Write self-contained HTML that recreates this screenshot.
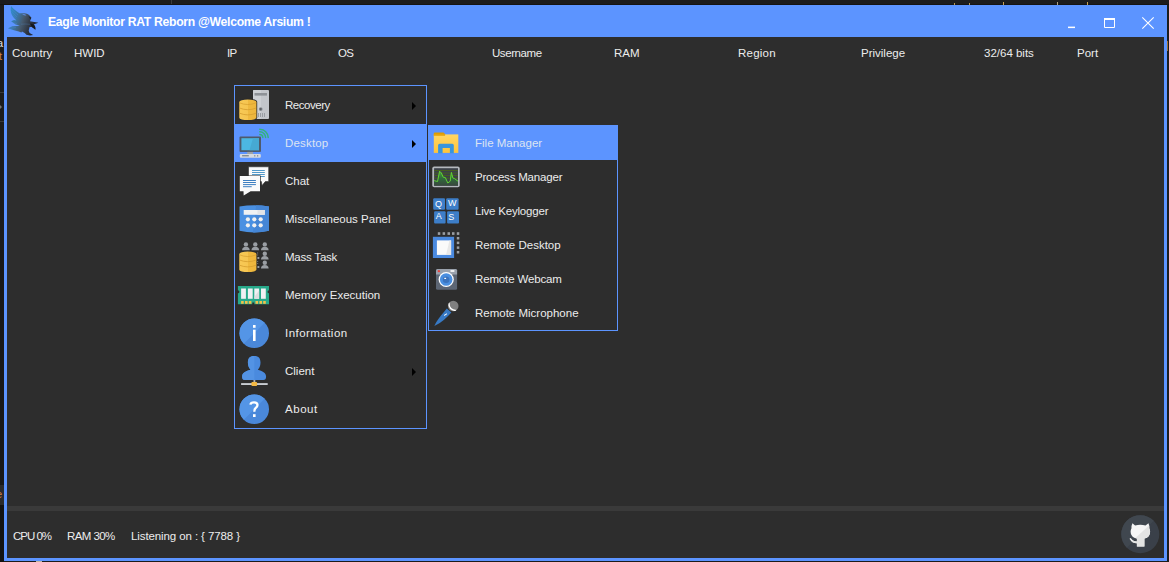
<!DOCTYPE html>
<html><head><meta charset="utf-8">
<style>
*{margin:0;padding:0;box-sizing:border-box}
html,body{width:1169px;height:562px;overflow:hidden;background:#1c1c1c;font-family:"Liberation Sans",sans-serif}
.abs{position:absolute}
#win{position:absolute;left:4px;top:5px;width:1163px;height:556px;background:#5c94ff}
#content{position:absolute;left:7px;top:37px;width:1157px;height:521px;background:#2d2d2d}
.title{position:absolute;left:48px;top:15px;font-size:12.2px;font-weight:bold;color:#fff;white-space:nowrap;line-height:14px;letter-spacing:-0.3px}
.hdr{position:absolute;top:46px;font-size:11.5px;color:#ececec;white-space:nowrap;line-height:14px}
.status{position:absolute;top:529px;font-size:11.5px;color:#ececec;white-space:nowrap;line-height:14px}
#sep{position:absolute;left:7px;top:506px;width:1157px;height:5px;background:#3a3a3a}
.menu{position:absolute;background:#2d2d2d;border:1px solid #5c94ff}
.item{position:absolute;left:0;width:100%;}
.item.hl{background:#5c94ff}
.lbl{position:absolute;font-size:11.5px;color:#ececec;white-space:nowrap;line-height:14px}
.hl .lbl{color:#dde4f2}
.arr{position:absolute;width:0;height:0;border-top:4px solid transparent;border-bottom:4px solid transparent;border-left:4px solid #000}
.ico{position:absolute}
</style></head><body>

<div class="abs" style="left:171px;top:0;width:1px;height:5px;background:#3a3a3a"></div>
<div class="abs" style="left:0;top:4px;width:1169px;height:1px;background:#151412"></div>
<div class="abs" style="left:0;top:92px;width:4px;height:1px;background:#3a3a3a"></div>
<div class="abs" style="left:0;top:121px;width:4px;height:1px;background:#3a3a3a"></div>
<div class="abs" style="left:0;top:105px;width:0;height:0;border-top:2.5px solid transparent;border-bottom:2.5px solid transparent;border-left:2.5px solid #777"></div>
<div class="abs" style="left:0;top:250px;width:4px;height:235px;background:#181818"></div>
<div class="abs" style="left:0;top:485px;width:4px;height:20px;background:#2a2a2a"></div>
<div class="abs" style="left:0;top:505px;width:4px;height:57px;background:#121212"></div>
<div class="abs" style="left:-3px;top:36px;font-size:11px;line-height:14px;color:#e0e0e0;overflow:hidden;width:7px">a</div>
<div class="abs" style="left:-1px;top:49px;font-size:11px;line-height:14px;color:#d08040;overflow:hidden;width:5px">t</div>
<div class="abs" style="left:-4px;top:487px;font-size:11px;line-height:14px;color:#d08040;width:10px;overflow:hidden">e</div>
<div class="abs" style="left:1167px;top:41px;width:1px;height:10px;background:#a07030"></div>
<div class="abs" style="left:36px;top:561px;width:6px;height:1px;background:#bdb5a5"></div>
<div class="abs" style="left:954px;top:3px;width:1px;height:2px;background:#b89a50"></div>
<div class="abs" style="left:969px;top:3px;width:1px;height:2px;background:#b89a50"></div>
<div class="abs" style="left:1003px;top:2px;width:1px;height:3px;background:#c8a050"></div>
<div class="abs" style="left:1057px;top:2px;width:1px;height:3px;background:#b0a080"></div>
<div class="abs" style="left:1087px;top:2px;width:1px;height:3px;background:#c8a050"></div>
<div id="win"></div>
<div id="content"></div>
<div class="title">Eagle Monitor RAT Reborn @Welcome Arsium !</div>

<div class="hdr" style="left:12px">Country</div>
<div class="hdr" style="left:74px">HWID</div>
<div class="hdr" style="left:227px;letter-spacing:-0.6px">IP</div>
<div class="hdr" style="left:338px;letter-spacing:-0.8px">OS</div>
<div class="hdr" style="left:492px;letter-spacing:-0.43px">Username</div>
<div class="hdr" style="left:614px">RAM</div>
<div class="hdr" style="left:738px;letter-spacing:0.24px">Region</div>
<div class="hdr" style="left:861px">Privilege</div>
<div class="hdr" style="left:984px">32/64 bits</div>
<div class="hdr" style="left:1077px">Port</div>

<div id="sep"></div>
<div class="status" style="left:13px;letter-spacing:-1.0px">CPU 0%</div>
<div class="status" style="left:67px;letter-spacing:-0.58px">RAM 30%</div>
<div class="status" style="left:131px;letter-spacing:-0.1px">Listening on : { 7788 }</div>

<!-- main menu -->
<div class="menu" style="left:234px;top:85px;width:193px;height:344px">
 <div class="item" style="top:0;height:38px"><div class="lbl" style="left:50px;top:12px;letter-spacing:-0.46px">Recovery</div><div class="arr" style="left:177px;top:15.5px"></div></div>
 <div class="item hl" style="top:38px;height:38px"><div class="lbl" style="left:50px;top:12px;letter-spacing:0.18px">Desktop</div><div class="arr" style="left:177px;top:15.5px"></div></div>
 <div class="item" style="top:76px;height:38px"><div class="lbl" style="left:50px;top:12px">Chat</div></div>
 <div class="item" style="top:114px;height:38px"><div class="lbl" style="left:50px;top:12px">Miscellaneous Panel</div></div>
 <div class="item" style="top:152px;height:38px"><div class="lbl" style="left:50px;top:12px;letter-spacing:-0.22px">Mass Task</div></div>
 <div class="item" style="top:190px;height:38px"><div class="lbl" style="left:50px;top:12px">Memory Execution</div></div>
 <div class="item" style="top:228px;height:38px"><div class="lbl" style="left:50px;top:12px;letter-spacing:0.46px">Information</div></div>
 <div class="item" style="top:266px;height:38px"><div class="lbl" style="left:50px;top:12px">Client</div><div class="arr" style="left:177px;top:15.5px"></div></div>
 <div class="item" style="top:304px;height:38px"><div class="lbl" style="left:50px;top:12px;letter-spacing:0.55px">About</div></div>
</div>

<!-- sub menu -->
<div class="menu" style="left:428px;top:125px;width:190px;height:206px">
 <div class="item hl" style="top:0;height:34px"><div class="lbl" style="left:46px;top:10px">File Manager</div></div>
 <div class="item" style="top:34px;height:34px"><div class="lbl" style="left:46px;top:10px;letter-spacing:-0.19px">Process Manager</div></div>
 <div class="item" style="top:68px;height:34px"><div class="lbl" style="left:46px;top:10px;letter-spacing:-0.2px">Live Keylogger</div></div>
 <div class="item" style="top:102px;height:34px"><div class="lbl" style="left:46px;top:10px">Remote Desktop</div></div>
 <div class="item" style="top:136px;height:34px"><div class="lbl" style="left:46px;top:10px;letter-spacing:-0.14px">Remote Webcam</div></div>
 <div class="item" style="top:170px;height:34px"><div class="lbl" style="left:46px;top:10px">Remote Microphone</div></div>
</div>


<svg class="abs" style="left:0;top:0" width="1169" height="562" viewBox="0 0 1169 562">
<defs>
 <linearGradient id="gold" x1="0" x2="1" y1="0" y2="0"><stop offset="0" stop-color="#f8c955"/><stop offset="0.5" stop-color="#f6c550"/><stop offset="0.5" stop-color="#efb93f"/><stop offset="1" stop-color="#eeb63c"/></linearGradient>
 <linearGradient id="fold" x1="0" x2="0" y1="0" y2="1"><stop offset="0" stop-color="#ffd665"/><stop offset="1" stop-color="#ffc43a"/></linearGradient>
 <g id="db">
  <path d="M238.5,101.8 A9.35,3.1 0 0 1 257.2,101.8 L257.2,117.8 A9.35,3.1 0 0 1 238.5,117.8 Z" fill="#2d2d2d"/>
  <path d="M239.3,101.9 A8.55,2.3 0 0 1 256.4,101.9 L256.4,117.8 A8.55,2.3 0 0 1 239.3,117.8 Z" fill="url(#gold)"/>
  <path d="M239.5,102.8 Q247.8,106.3 256.2,102.8" fill="none" stroke="#d9a232" stroke-width="0.8"/>
  <path d="M239.5,108 Q247.8,111.4 256.2,108" fill="none" stroke="#d9a232" stroke-width="0.9"/>
  <path d="M239.5,113.2 Q247.8,116.6 256.2,113.2" fill="none" stroke="#d9a232" stroke-width="0.9"/>
 </g>
</defs>

<!-- Recovery: server + db -->
<rect x="253" y="90" width="16" height="29" rx="1" fill="#c3c6cb"/>
<rect x="253" y="90" width="8" height="29" rx="1" fill="#cdd0d4"/>
<rect x="254.5" y="93" width="12.5" height="2.6" fill="#8e9297"/>
<circle cx="260.7" cy="109.1" r="1.9" fill="#8a8e94"/><circle cx="260.7" cy="109.1" r="1.1" fill="#5f6368"/>
<g fill="#9a9ea4"><rect x="258" y="113" width="1" height="4"/><rect x="260" y="113" width="1" height="4"/><rect x="262" y="113" width="1" height="4"/><rect x="264" y="113" width="1" height="4"/></g>
<use href="#db"/>

<!-- Desktop -->
<rect x="239.5" y="136.5" width="21.5" height="15.5" rx="1" fill="#4e5a6c"/>
<rect x="241.4" y="138.2" width="17.6" height="12" fill="#4cb7e2"/>
<path d="M253,138.2 L259,138.2 L259,150.2 L249.5,150.2 Z" fill="#46a9d3"/>
<rect x="247.2" y="151.9" width="5.8" height="2.3" fill="#9aa2aa"/>
<rect x="239.8" y="154.1" width="21" height="3.6" rx="1" fill="#d6dae0"/>
<rect x="242.1" y="155.1" width="6.7" height="1.3" fill="#7a8490"/>
<rect x="254.3" y="155" width="1" height="1.6" fill="#7a8490"/><rect x="257.2" y="155" width="1" height="1.6" fill="#7a8490"/>
<g fill="none" stroke="#33b37c" stroke-width="1.5" stroke-linecap="round">
 <path d="M259.8,134.6 A3,3 0 0 1 262.8,137.6"/>
 <path d="M259.8,131.8 A5.8,5.8 0 0 1 265.6,137.6"/>
 <path d="M259.8,129.2 A8.4,8.4 0 0 1 268.2,137.6"/>
</g>

<!-- Chat -->
<path d="M248.5,166.8 H268.7 V181.6 H265.3 L262,185.6 L261.4,181.6 H248.5 Z" fill="#fafafa" stroke="#2d2d2d" stroke-width="0.6"/>
<g fill="#3f8fc4"><rect x="252" y="170" width="12.8" height="0.9"/><rect x="252" y="172" width="12.8" height="0.9"/><rect x="252" y="174" width="12.8" height="0.9"/><rect x="252" y="176" width="12.8" height="0.9"/></g>
<path d="M239.8,176.1 H260 V191.2 H250.6 L243.7,195.6 L243.5,191.2 H239.8 Z" fill="#fafafa" stroke="#2d2d2d" stroke-width="1.4" paint-order="stroke"/>
<g fill="#3d7fc1"><rect x="243" y="180" width="12.9" height="1"/><rect x="243" y="182" width="12.9" height="1"/><rect x="243" y="184.1" width="12.9" height="1"/><rect x="243" y="186.2" width="8.7" height="1"/></g>

<!-- Misc panel -->
<clipPath id="mpc"><path d="M239.5,206.4 Q254.2,204 269,206.4 L269,230.8 Q254.2,234 239.5,230.8 Z"/></clipPath>
<path d="M239.5,206.4 Q254.2,204 269,206.4 L269,230.8 Q254.2,234 239.5,230.8 Z" fill="#4a90e2"/>
<path d="M256.8,200 L275,200 L275,240 L252,240 Z" fill="#4586d6" clip-path="url(#mpc)"/>
<rect x="243.7" y="210" width="21.1" height="4.8" fill="#eff1f3"/>
<rect x="257.5" y="210" width="7.3" height="4.8" fill="#e2e4e7"/>
<g fill="#f0f0f0"><circle cx="247.9" cy="219.3" r="2.1"/><circle cx="254.3" cy="219.3" r="2.1"/><circle cx="260.7" cy="219.3" r="2.1"/><circle cx="247.9" cy="225.3" r="2.1"/><circle cx="254.3" cy="225.3" r="2.1"/><circle cx="260.7" cy="225.3" r="2.1"/></g>

<!-- Mass task -->
<g fill="#9a9ea3">
 <circle cx="245.9" cy="244.4" r="2.2"/><path d="M242.1,250.3 Q242.1,246.8 245.9,246.8 Q249.7,246.8 249.7,250.3 Z"/>
 <circle cx="255.3" cy="244.4" r="2.2"/><path d="M251.5,250.3 Q251.5,246.8 255.3,246.8 Q259.1,246.8 259.1,250.3 Z"/>
 <circle cx="264.8" cy="244.4" r="2.2"/><path d="M261,250.3 Q261,246.8 264.8,246.8 Q268.6,246.8 268.6,250.3 Z"/>
 <circle cx="264.8" cy="253.8" r="2.2"/><path d="M261,259.6 Q261,256.1 264.8,256.1 Q268.6,256.1 268.6,259.6 Z"/>
 <circle cx="264.8" cy="262.8" r="2.2"/><path d="M261,268.6 Q261,265.1 264.8,265.1 Q268.6,265.1 268.6,268.6 Z"/>
 <rect x="257.3" y="252.5" width="0.8" height="1"/><rect x="257.3" y="254.5" width="0.8" height="1"/>
 <rect x="257.3" y="257" width="2" height="2"/><rect x="257.3" y="261" width="0.8" height="1"/><rect x="257.3" y="263" width="0.8" height="1"/><rect x="257.3" y="266" width="2" height="2"/>
</g>
<use href="#db" transform="translate(0,152)"/>

<!-- Memory -->
<path d="M237.9,286 H269 V290.2 A1.5,1.5 0 0 0 269,293.2 V304.2 H254.3 V302.6 H252.3 V304.2 H237.9 V293.2 A1.5,1.5 0 0 0 237.9,290.2 Z" fill="#27a98a"/>
<g fill="#f1f0f3"><rect x="241.1" y="288.5" width="4.8" height="10.3"/><rect x="247.9" y="288.5" width="4.8" height="10.3"/><rect x="254.3" y="288.5" width="4.8" height="10.3"/><rect x="261" y="288.5" width="4.8" height="10.3"/></g>
<path d="M259.1,290.5 V298.8 H254.3 V297 Z" fill="#dedde0"/>
<g fill="#f3c04a"><rect x="241.1" y="301" width="2.6" height="2.8"/><rect x="245" y="301" width="2.6" height="2.8"/><rect x="248.8" y="301" width="2.6" height="2.8"/><rect x="255.5" y="301" width="2.6" height="2.8"/><rect x="259.4" y="301" width="2.6" height="2.8"/><rect x="263.2" y="301" width="2.6" height="2.8"/></g>

<!-- Info -->
<circle cx="254.25" cy="333.25" r="14.75" fill="#4a88da"/>
<path d="M243.82,343.68 A14.75,14.75 0 1 1 264.68,322.82 Z" fill="#5495e6"/>
<rect x="253" y="325" width="2.6" height="2.8" fill="#fff"/>
<rect x="253" y="329.7" width="2.6" height="11.3" fill="#fff"/>

<!-- Client -->
<path d="M254.3,355.9 C249.5,355.9 247.9,358.5 247.9,362.8 C247.9,366 249.3,368.5 250.6,369.7 C246,371 242.1,372.5 242.1,376.5 C242.1,379 243,379.9 245,379.9 L263.3,379.9 C265.3,379.9 266.1,379 266.1,376.5 C266.1,372.5 262.3,371 257.8,369.7 C259.1,368.5 260.5,366 260.5,362.8 C260.5,358.5 259,355.9 254.3,355.9 Z" fill="#4a8ade"/>
<path d="M254.3,355.9 C249.5,355.9 247.9,358.5 247.9,362.8 C247.9,366 249.3,368.5 250.6,369.7 C246,371 242.1,372.5 242.1,376.5 C242.1,379 243,379.9 245,379.9 L254.3,379.9 Z" fill="#5393e4"/>
<rect x="253.5" y="380" width="1.8" height="2.5" fill="#b0b4ba"/>
<rect x="241.1" y="383.1" width="26.6" height="1.9" fill="#c8ccd2"/>
<rect x="251.4" y="382.1" width="5.7" height="3.9" rx="1" fill="#f2b843"/>

<!-- About -->
<circle cx="254.25" cy="409.25" r="14.75" fill="#4a88da"/>
<path d="M243.82,419.68 A14.75,14.75 0 1 1 264.68,398.82 Z" fill="#5495e6"/>
<path d="M250.4,404.6 Q250.8,402.3 254,402.3 Q257.5,402.3 257.5,405 Q257.5,406.8 255.7,408 Q254.3,409 254.3,411.8" fill="none" stroke="#fff" stroke-width="2.3"/>
<rect x="253" y="414.2" width="2.6" height="2.8" fill="#fff"/>

<!-- File manager -->
<path d="M433.8,133.5 Q433.8,132.4 435,132.4 H443.5 L445.3,134.2 V136 H433.8 Z" fill="#e09c00"/>
<rect x="433.8" y="134.4" width="24.5" height="18.5" fill="url(#fold)"/>
<rect x="433.8" y="134.2" width="11.3" height="1.5" fill="#e09c00"/>
<path d="M438.1,153.2 V145.3 Q438.1,143.8 439.6,143.8 H452.3 Q453.8,143.8 453.8,145.3 V153.2 H449.9 V148.1 H442.6 V153.2 Z" fill="#3a95dc"/>

<!-- Process manager -->
<defs><linearGradient id="pmg" gradientUnits="userSpaceOnUse" x1="0" y1="171" x2="0" y2="186"><stop offset="0" stop-color="#45a23a"/><stop offset="0.5" stop-color="#2f6a3a"/><stop offset="1" stop-color="#3a453f"/></linearGradient></defs>
<rect x="432.3" y="166.6" width="27.4" height="20.7" rx="1.8" fill="#b4b8be"/>
<rect x="434.1" y="168.2" width="23.9" height="17.5" fill="#3b4048"/>
<g fill="#4b6a12"><rect x="434.1" y="170" width="23.9" height="0.7"/><rect x="434.1" y="172.7" width="23.9" height="0.7"/><rect x="434.1" y="175.1" width="23.9" height="0.7"/><rect x="434.1" y="177.8" width="23.9" height="0.7"/></g>
<path d="M434.1,180.6 L437.5,181.5 L439.6,171.2 L441.4,173 L443.2,177.2 L445.3,177.5 L447.8,183 L450.2,181.2 L451.4,172.4 L452.9,178.1 L454.4,178.5 L458,181.2 V185.7 H434.1 Z" fill="url(#pmg)"/>
<path d="M434.1,180.6 L437.5,181.5 L439.6,171.2 L441.4,173 L443.2,177.2 L445.3,177.5 L447.8,183 L450.2,181.2 L451.4,172.4 L452.9,178.1 L454.4,178.5 L458,181.2" fill="none" stroke="#5fd433" stroke-width="1"/>

<!-- Keylogger -->
<g fill="#3d7ec8">
 <rect x="433.2" y="198.2" width="11.8" height="11.5" rx="1"/>
 <rect x="446.2" y="198.2" width="12.4" height="11.5" rx="1"/>
 <rect x="434.1" y="211.2" width="11.5" height="12.4" rx="1"/>
 <rect x="447.1" y="211.2" width="11.9" height="12.4" rx="1"/>
</g>
<g fill="#fff" font-family="Liberation Sans" font-size="9" text-anchor="middle">
 <text x="438.5" y="207">Q</text><text x="452.2" y="206">W</text><text x="438.8" y="219.3">A</text><text x="451.3" y="219.5">S</text>
</g>

<!-- Remote desktop -->
<g fill="#9a9ea3">
 <rect x="437.8" y="232.2" width="2.5" height="2.7"/><rect x="442.6" y="232.2" width="2.5" height="2.7"/><rect x="447.5" y="232.2" width="2.5" height="2.7"/><rect x="452" y="232.2" width="2.5" height="2.7"/><rect x="456.8" y="232.2" width="2.5" height="2.7"/>
 <rect x="456.8" y="237" width="2.5" height="2.5"/><rect x="456.8" y="241.6" width="2.5" height="2.5"/><rect x="456.8" y="246.4" width="2.5" height="2.5"/><rect x="456.8" y="251" width="2.5" height="2.5"/>
</g>
<rect x="432.9" y="236.8" width="21.2" height="21.2" fill="#4a8ae0"/>
<rect x="436.9" y="240.4" width="14.2" height="14.5" fill="#fafafa"/>
<path d="M449.5,240.4 H451.1 V254.9 H446 Z" fill="#e8e8e8"/>

<!-- Webcam -->
<rect x="436" y="269" width="21.1" height="20.8" rx="1.5" fill="#5d6674"/>
<path d="M436,274.4 V270.5 Q436,269 437.5,269 H455.6 Q457.1,269 457.1,270.5 V274.4 Z" fill="#9aa2ad"/>
<rect x="437.8" y="270.2" width="2.1" height="1.9" fill="#e8413c"/>
<rect x="450.5" y="270.2" width="3.9" height="1.6" fill="#fff"/>
<circle cx="446.2" cy="279.5" r="7.6" fill="#fff"/>
<circle cx="446.2" cy="279.5" r="6.3" fill="#4a8fe0"/>
<circle cx="446.1" cy="279.7" r="3.3" fill="#3b73bd"/>
<rect x="444.3" y="277.8" width="1.8" height="1.2" fill="#fff"/>


<!-- title bar buttons -->
<rect x="1068" y="26.6" width="7" height="1.5" fill="#fff"/>
<path d="M1104.5,18.5 H1114.5 V27.5 H1104.5 Z" fill="none" stroke="#fff" stroke-width="1"/>
<rect x="1104" y="18" width="11" height="2" fill="#fff"/>
<path d="M1142.3,17.3 L1153.7,28.7 M1142.3,28.7 L1153.7,17.3" stroke="#fff" stroke-width="1.1"/>

<!-- eagle -->
<defs>
 <linearGradient id="eg" gradientUnits="userSpaceOnUse" x1="8" y1="14" x2="36" y2="24"><stop offset="0" stop-color="#1a8ab5" stop-opacity="0.7"/><stop offset="0.3" stop-color="#34729a" stop-opacity="0.85"/><stop offset="0.55" stop-color="#46596c"/><stop offset="0.8" stop-color="#2f3642"/><stop offset="1" stop-color="#1e232c"/></linearGradient>
</defs>
<path d="M11.1,6.1 C13,8.5 16,11.5 19.4,13.2 L22.9,13.3 C25.5,13 28.5,13.5 30.4,16.4 L31.3,17.8 L30,21.3 L38.4,22.7 L34,24.2 L35.3,27.1 L35.3,29.8 L34,28.4 L31.8,27.1 L29.6,27.1 L28.7,30.7 L29.6,32.9 L33.1,35.1 L30,35.6 L26.4,34.7 L24.7,32.9 L22,31.6 L21.4,32.4 L18.8,31.5 L14,30.2 L7.9,28.3 L12.4,26.3 L17.2,26 L19.8,25.4 L15.6,24.4 L11.1,21.2 L14,19.9 L16.5,20.4 C14,18.5 12,16 11,12.5 C10.5,10 10.6,8 11.1,6.1 Z" fill="url(#eg)"/>
<g stroke="#5b8ff0" stroke-width="0.5" stroke-opacity="0.5" fill="none"><path d="M11.3,9 L18,15"/><path d="M11.2,11.5 L17,17"/><path d="M11.8,14.3 L16,18.5"/><path d="M10,28.2 L16,27.6"/><path d="M13,23 L17,23.5"/></g>
<path d="M22.2,14.2 C23.8,13.8 25.5,14.3 26.4,15.5 C24.8,15.6 23.3,15.1 22.2,14.2 Z" fill="#5f90e8" fill-opacity="0.8"/>
<path d="M21,24.2 C24,23.9 27,24 30,24.3" fill="none" stroke="#4f84c0" stroke-width="0.6" stroke-opacity="0.55"/>
<path d="M28.5,16.2 L31.3,17.8 L30.6,19.5 Z" fill="#1e232c"/>
<path d="M30.2,23.6 C32.5,23.7 34.3,25 35,26.8 C35.4,27.8 35.4,29 35.3,29.8 C34.6,28.8 33.8,28.2 33,28.1 C31.7,26.9 30.8,25.4 30.2,23.6 Z" fill="#15191f"/>
<!-- github -->
<defs><clipPath id="ghc"><path d="M1120,555 L1120,551.9 L1160,515.6 L1160,555 Z"/></clipPath>
<path id="cat" d="M1132.45,523.3 L1135.1,525.4 Q1140.3,524.3 1145.5,525.4 L1148.5,523.3 Q1149.5,525.8 1149.3,528.3 Q1150.1,530 1150.1,531.8 Q1150.1,537.6 1144.4,538.5 L1144.4,546.6 L1136.9,546.6 L1136.9,543.3 Q1132.2,543.4 1129.5,538.7 L1130.7,538.1 Q1133,541.6 1136.9,541.6 L1136.9,538.5 Q1130.6,537.6 1130.6,531.8 Q1130.6,530 1131.5,528.3 Q1131.2,525.8 1132.45,523.3 Z"/></defs>
<circle cx="1140.3" cy="534.2" r="19" fill="#3a4049"/>
<path d="M1126.86,547.64 A19,19 0 1 1 1153.74,520.76 Z" fill="#40474f"/>
<use href="#cat" fill="#f6f6f6"/>
<use href="#cat" fill="#e3e3e3" clip-path="url(#ghc)"/>
<!-- Microphone -->
<path d="M446.8,308.4 L451.4,312.5 Q447.8,316.5 444.1,319.8 Q439.2,324 434.4,326 Q435.6,322.3 441,315.4 Z" fill="#3779c4"/>
<circle cx="453.2" cy="306" r="5.3" fill="#808080"/>
<clipPath id="micc"><circle cx="453.2" cy="306" r="5.3"/></clipPath><path d="M448.9,302.8 Q448.6,310 456.3,310.8" fill="none" stroke="#fff" stroke-width="1.4" clip-path="url(#micc)"/>
<path d="M444,315 L446.8,313.2 L447,314.3 L444.3,316.1 Z" fill="#fff"/>
</svg>

</body></html>
